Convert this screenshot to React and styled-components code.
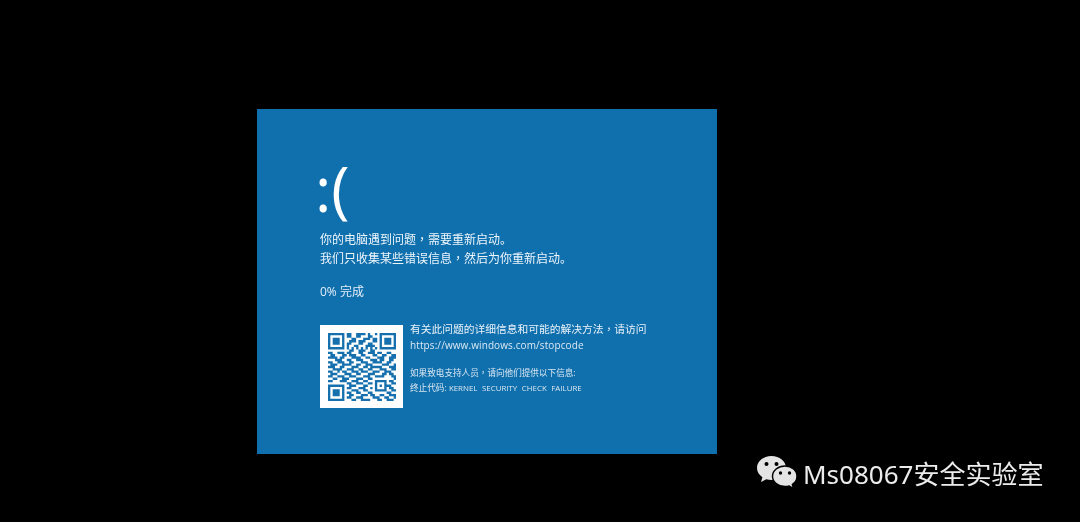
import React from "react";
import styled, { createGlobalStyle } from "styled-components";

const Global = createGlobalStyle`
  html, body { margin: 0; padding: 0; background: #000; }
  body { font-family: "Open Sans", "Noto Sans CJK SC", sans-serif; }
`;

const Page = styled.div`
  position: relative;
  width: 1080px;
  height: 522px;
  overflow: hidden;
  background: #000;
  padding: 109px 0 0 257px;
  box-sizing: border-box;
`;

const Panel = styled.main`
  width: 460px;
  height: 345px;
  box-sizing: border-box;
  padding: 44px 0 0 59px;
  background: #106fad;
  color: #fff;
  display: flex;
  flex-direction: column;
  align-items: flex-start;
`;

const Face = styled.div`
  height: 77px;
  margin-left: -1px;
  font-family: "Open Sans", sans-serif;
  font-weight: 400;
  font-size: 62px;
  line-height: 70px;
  filter: blur(0.4px);
`;

const Message = styled.p`
  margin: 0 0 0 4px;
  font-size: 12px;
  line-height: 19px;
  color: #eef6fb;
  filter: blur(0.45px);
`;

const Progress = styled.p`
  margin: 15px 0 0 4px;
  font-size: 12px;
  line-height: 18px;
  color: #e4f0f8;
  filter: blur(0.45px);
`;

const Footer = styled.section`
  display: flex;
  gap: 7px;
  margin: 24px 0 0 4px;
`;

const QrCard = styled.div`
  width: 83px;
  height: 83px;
  background: #fff;
  flex: none;
  box-sizing: border-box;
  padding: 8px 7px 7px 8px;
  svg { display: block; filter: blur(0.6px); }
`;

const Details = styled.div`
  display: flex;
  flex-direction: column;
  margin-top: -4px;
  filter: blur(0.45px);
`;

const Heading = styled.div`
  font-size: 10.75px;
  line-height: 16px;
  white-space: nowrap;
  color: #e8f2f9;
`;

const Link = styled.div`
  font-size: 10px;
  line-height: 16px;
  letter-spacing: 0.1px;
  white-space: nowrap;
  color: #dbe9f3;
`;

const Support = styled.div`
  font-size: 8.6px;
  line-height: 15px;
  white-space: nowrap;
  color: #dbe9f3;
  margin-top: ${(p) => p.$top || 0}px;
`;

const Code = styled.span`
  font-size: 7.9px;
  word-spacing: 2.5px;
  line-height: 0;
`;

const Comma = styled.span`
  font-family: "Noto Sans CJK TC", sans-serif;
  line-height: 0;
`;

const Watermark = styled.div`
  position: absolute;
  left: 756px;
  top: 454px;
  display: flex;
  align-items: center;
  gap: 5px;
  color: #ececec;
  font-family: "Noto Sans", "Noto Sans CJK SC", sans-serif;
  font-size: 26px;
  line-height: 40px;
  white-space: nowrap;
  filter: blur(0.3px);
`;

const rows = [
  "11111110 1100111101001 01111111",
  "10000010 1100110001100 01000001",
  "10111010 0011000111011 01011101",
  "10111010 0111011100011 01011101",
  "10111010 1100011001100 01011101",
  "10000010 1001100011110 01000001",
  "11111110 1010101010101 01111111",
  "00000000 0110011100110 00000000",
  "11001110 1100011001110 11001100",
  "01100011 0111001100011 00110011",
  "11110110 0011110011000 11100111",
  "00011100 1100111000111 01100110",
  "11001110 0110001110011 11001100",
  "01110011 1100110011100 00111001",
  "11100110 0011100110111 11000111",
  "00111100 1110011001100 01110011",
  "11001011 0011101110011 10011100",
  "01110001 1100110001110 00110110",
  "11001110 0111000111001 11100011",
  "00110011 1000111001100 00000001",
  "11000111 001110011000 11111 0110",
  "00000000 110011100110 10001 0011",
  "11111110 011100011000 10101 1100",
  "10000010 110001110010 10001 0110",
  "10111010 001110011000 11111 0011",
  "10111010 110011000110 00000 1100",
  "10111010 011000111011 00110 0111",
  "10000010 110011100001 11001 1001",
  "11111110 001100111100 01100 1110",
];

const qrPath = rows
  .map((row, y) =>
    [...row.replace(/ /g, "")]
      .map((c, x) => (c === "1" ? `M${x} ${y}h1v1h-1z` : ""))
      .join("")
  )
  .join("");

const QrCode = () => (
  <svg width="68" height="68" viewBox="0 0 29 29" aria-label="QR">
    <path d={qrPath} fill="#1570ad" />
  </svg>
);

const WeChat = () => (
  <svg width="42" height="38" viewBox="0 0 42 38">
    <path
      d="M15.5 1C7.5 1 1 6.3 1 13c0 3.8 2.1 7 5.4 9.2L5 27l5.3-2.7c1.7.5 3.4.8 5.2.8 8 0 14.5-5.4 14.5-12.1S23.5 1 15.5 1z"
      fill="#e4e4e4"
    />
    <path
      d="M29 11c-6.9 0-12.5 4.6-12.5 10.3S22.1 31.6 29 31.6c1.5 0 2.9-.2 4.2-.6l4.3 2.7-1.1-4.2c2.9-1.9 4.6-4.8 4.6-8.2C41 15.6 35.9 11 29 11z"
      fill="#e4e4e4"
      stroke="#000"
      strokeWidth="1.5"
    />
    <circle cx="10.5" cy="9" r="2" fill="#000" />
    <circle cx="20.5" cy="9" r="2" fill="#000" />
    <circle cx="24.5" cy="18" r="1.7" fill="#000" />
    <circle cx="33.5" cy="18" r="1.7" fill="#000" />
  </svg>
);

export default function App() {
  return (
    <>
      <Global />
      <Page>
        <Panel>
          <Face>:(</Face>
          <Message>
            你的电脑遇到问题<Comma>，</Comma>需要重新启动。
            <br />
            我们只收集某些错误信息<Comma>，</Comma>然后为你重新启动。
          </Message>
          <Progress>0% 完成</Progress>
          <Footer>
            <QrCard>
              <QrCode />
            </QrCard>
            <Details>
              <Heading>
                有关此问题的详细信息和可能的解决方法<Comma>，</Comma>请访问
              </Heading>
              <Link>https://www.windows.com/stopcode</Link>
              <Support $top={13}>
                如果致电支持人员<Comma>，</Comma>请向他们提供以下信息:
              </Support>
              <Support>
                终止代码: <Code>KERNEL SECURITY CHECK FAILURE</Code>
              </Support>
            </Details>
          </Footer>
        </Panel>
        <Watermark>
          <WeChat />
          <span>Ms08067安全实验室</span>
        </Watermark>
      </Page>
    </>
  );
}
